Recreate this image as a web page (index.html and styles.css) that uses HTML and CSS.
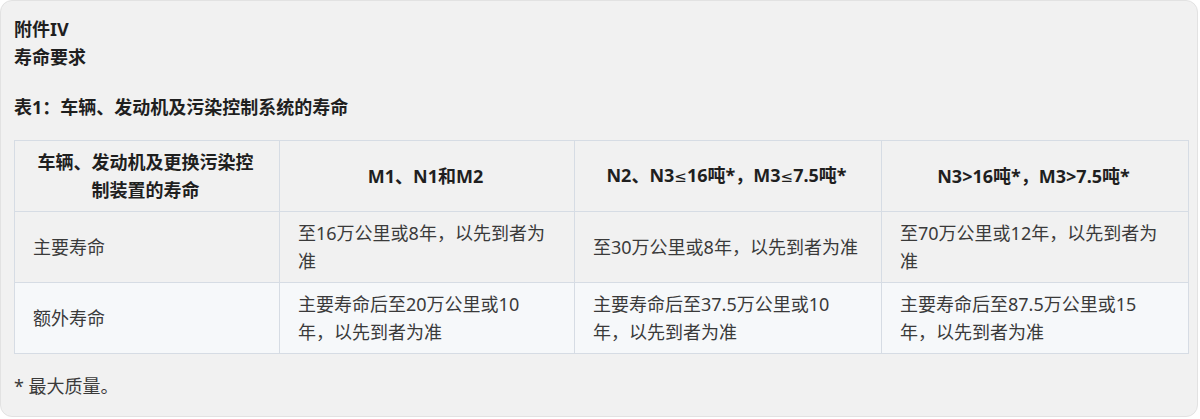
FILE: index.html
```html
<!DOCTYPE html>
<html lang="zh">
<head>
<meta charset="utf-8">
<link rel="stylesheet" href="styles.css">
</head>
<body>
<div class="card">
  <p class="title"><strong>附件IV</strong><br><strong>寿命要求</strong></p>
  <p class="caption"><strong>表1：车辆、发动机及污染控制系统的寿命</strong></p>
  <table class="life">
    <colgroup>
      <col class="c1"><col class="c2"><col class="c3"><col class="c4">
    </colgroup>
    <thead>
      <tr>
        <th>车辆、发动机及更换污染控制装置的寿命</th>
        <th>M1、N1和M2</th>
        <th>N2、N3<span class="sym">≤</span>16吨*，M3<span class="sym">≤</span>7.5吨*</th>
        <th>N3&gt;16吨*，M3&gt;7.5吨*</th>
      </tr>
    </thead>
    <tbody>
      <tr>
        <td>主要寿命</td>
        <td>至16万公里或8年，以先到者为准</td>
        <td>至30万公里或8年，以先到者为准</td>
        <td>至70万公里或12年，以先到者为准</td>
      </tr>
      <tr class="alt">
        <td>额外寿命</td>
        <td>主要寿命后至20万公里或10年，以先到者为准</td>
        <td>主要寿命后至37.5万公里或10年，以先到者为准</td>
        <td>主要寿命后至87.5万公里或15年，以先到者为准</td>
      </tr>
    </tbody>
  </table>
  <p class="note">* 最大质量。</p>
</div>
</body>
</html>
```
FILE: styles.css
```css
html, body {
  margin: 0;
  padding: 0;
  background: #ffffff;
}
body {
  font-family: "Noto Sans", "Noto Sans CJK SC", sans-serif;
  font-size: 18px;
  line-height: 28px;
  color: #3a3a3a;
  text-spacing-trim: space-all;
}
.card {
  width: 1198px;
  box-sizing: border-box;
  height: 417px;
  background: #f1f1f1;
  border: 1px solid #e2e2e2;
  border-radius: 12px;
  padding: 14px 10px 14px 13px;
}
.card p {
  margin: 0;
}
strong {
  font-weight: 700;
  color: #1f1f1f;
}
.card .caption {
  margin-top: 22px;
}
.life {
  margin-top: 19px;
  width: 1174px;
  border-collapse: collapse;
  table-layout: fixed;
}
.c1 { width: 265px; }
.c2 { width: 295px; }
.c3 { width: 307px; }
.c4 { width: 307px; }
.life th, .life td {
  border: 1px solid #d6dce4;
  padding: 7px 21px 7px 18px;
  vertical-align: middle;
}
.life th {
  font-weight: 700;
  text-align: center;
  color: #1f1f1f;
}
.life td {
  text-align: left;
  color: #3a3a3a;
}
.life tr.alt td {
  background: #f6f8fa;
}
.sym {
  font-family: "DejaVu Sans", "Liberation Sans", sans-serif;
  font-weight: 400;
  font-size: 15px;
}
.card .note {
  margin-top: 18px;
}
```
